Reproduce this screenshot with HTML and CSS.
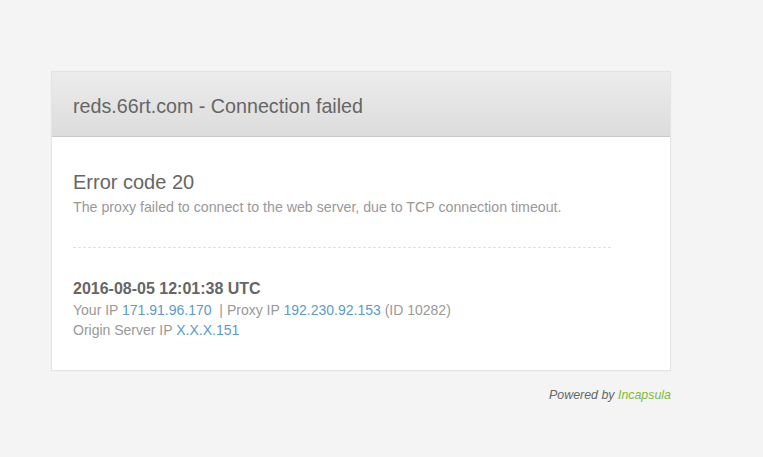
FILE: index.html
```html
<!DOCTYPE html>
<html>
<head>
<meta charset="utf-8">
<link rel="stylesheet" href="styles.css">
</head>
<body>
<div class="wrap">
  <div class="card">
    <div class="head"><h1>reds.66rt.com - Connection failed</h1></div>
    <div class="body">
      <h2>Error code 20</h2>
      <p class="desc">The proxy failed to connect to the web server, due to TCP connection timeout.</p>
      <div class="sep"></div>
      <div class="time">2016-08-05 12:01:38 UTC</div>
      <div class="info">Your IP <a>171.91.96.170</a> &nbsp;| Proxy IP <a>192.230.92.153</a> (ID 10282)</div>
      <div class="info">Origin Server IP <a>X.X.X.151</a></div>
    </div>
  </div>
  <div class="powered">Powered by <span class="inc">Incapsula</span></div>
</div>
</body>
</html>
```
FILE: styles.css
```css
html, body { margin: 0; padding: 0; }
body {
  background: #f4f4f4;
  font-family: "Liberation Sans", Arial, sans-serif;
  color: #999;
}
.wrap {
  width: 620px;
  margin-left: 51px;
  padding-top: 71px;
}
.card {
  background: #fff;
  border: 1px solid #e4e4e4;
  box-shadow: 0 0 1px rgba(0,0,0,0.05);
}
.head {
  height: 64px;
  background: linear-gradient(#ececec, #dcdcdc);
  border-bottom: 1px solid #c9c9c9;
  display: flex;
  align-items: center;
  padding-left: 21px;
}
.head h1 {
  margin: 0;
  font-size: 19.7px;
  font-weight: normal;
  color: #666;
  position: relative;
  top: 2px;
}
.body {
  padding: 33px 59px 30px 21px;
}
.body h2 {
  margin: 0;
  font-size: 20px;
  font-weight: normal;
  color: #666;
  line-height: 24px;
}
.desc {
  margin: 4px 0 0;
  font-size: 14.2px;
  line-height: 18px;
  color: #999;
}
.sep {
  border-top: 1px dashed #e0e0e0;
  margin: 31px 0 31px;
}
.time {
  font-size: 16px;
  font-weight: bold;
  color: #666;
  line-height: 20px;
  margin-bottom: 1px;
}
.info {
  font-size: 14px;
  line-height: 20px;
  color: #999;
}
.info a { color: #5a9bcb; }
.powered {
  text-align: right;
  font-size: 12.4px;
  font-style: italic;
  color: #666;
  margin-top: 17px;
}
.inc { color: #7cbb3d; }
```
